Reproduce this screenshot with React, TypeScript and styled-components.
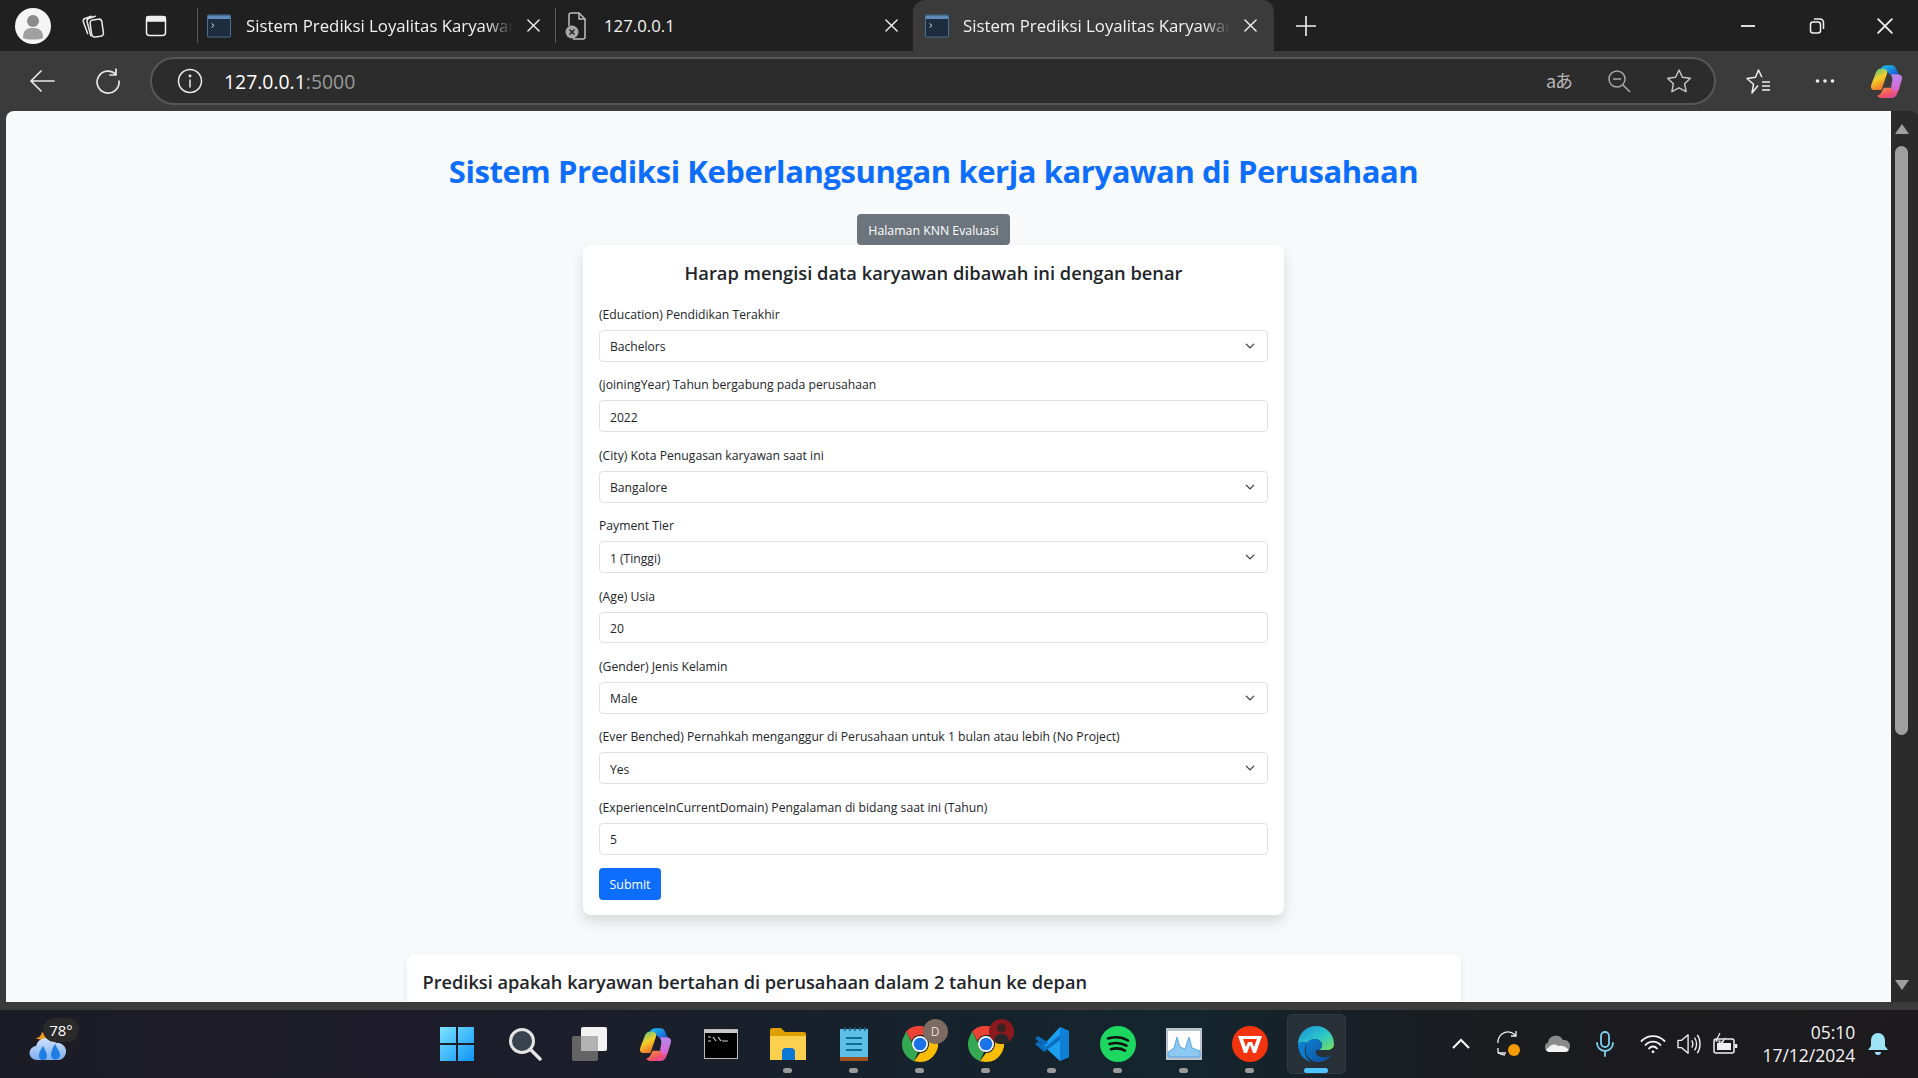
import React from "react";
import styled, { createGlobalStyle } from "styled-components";

const UI = `"Open Sans", "Noto Sans", "Liberation Sans", sans-serif`;

const Global = createGlobalStyle`
  html, body { margin: 0; padding: 0; height: 100%; overflow: hidden; background: #202020; }
  #root { height: 100%; }
  * { box-sizing: border-box; }
`;

const Frame = styled.div`
  width: 1918px; height: 1078px; display: flex; flex-direction: column;
  font-family: ${UI}; background: #3b3b3b; overflow: hidden;
`;

const TitleBar = styled.header`
  height: 51px; flex: none; display: flex; align-items: stretch; background: #202020; padding-left: 2px;
`;
const Slot = styled.div<{ $w: number }>`
  width: ${p => p.$w}px; flex: none; display: flex; align-items: center; justify-content: center;
`;
const Avatar = styled.div`
  width: 36px; height: 36px; border-radius: 50%; background: #f5f5f5; display: flex; align-items: center; justify-content: center;
`;
const Tab = styled.div<{ $active?: boolean }>`
  position: relative; flex: none; display: flex; align-items: center; color: #fff;
  width: ${p => (p.$active ? 361 : 358)}px;
  padding: ${p => (p.$active ? "0 16px 0 12px" : "0 14px 0 10px")};
  background: ${p => (p.$active ? "#3b3b3b" : "transparent")};
  border-radius: ${p => (p.$active ? "12px 12px 0 0" : "0")};
  ${p => !p.$active && `&::before { content: ""; position: absolute; left: 0; top: 8px; bottom: 8px; width: 1px; background: #5a5a5a; }`}
`;
const TabTitle = styled.span<{ $fade?: boolean; $gap?: number }>`
  flex: 1; min-width: 0; margin-left: ${p => p.$gap ?? 14}px; margin-right: 12px; margin-top: -1px; font-size: 16.8px; white-space: nowrap; overflow: hidden;
  color: #f2f2f2;
  ${p => p.$fade && `mask-image: linear-gradient(90deg, #000 90%, transparent 100%);`}
`;
const CloseGlyph = styled.span`
  width: 16px; height: 16px; flex: none; display: flex; align-items: center; justify-content: center;
`;
const WindowControls = styled.div`
  margin-left: auto; display: flex; align-items: stretch;
`;

const ToolBar = styled.div`
  height: 60px; flex: none; display: flex; align-items: center; background: #3b3b3b; padding-left: 9px;
`;
const AddressBar = styled.div`
  width: 1566px; height: 48px; margin-left: 9px; flex: none; display: flex; align-items: center;
  background: #2c2c2c; border: 2px solid #575757; border-radius: 24px; padding: 0 5px 0 25px;
`;
const Url = styled.div`
  margin-left: 21px; font-size: 19.4px; color: #fff; font-family: ${UI};
  span { color: #9a9a9a; }
`;
const AddressActions = styled.div`
  margin-left: auto; display: flex;
`;
const TranslateGlyph = styled.span`
  font-family: "Noto Sans CJK JP", "Noto Sans", sans-serif; font-size: 18px; color: #b8b8b8; letter-spacing: -1px; line-height: 1; margin-top: -2px;
`;

const ViewRow = styled.div`
  height: 891px; flex: none; display: flex; padding-left: 6px;
`;
const Page = styled.main`
  flex: 1; min-width: 0; background: #f8f9fa; border-radius: 8px 0 0 0; overflow: hidden;
  padding-right: 30px; display: flex; flex-direction: column; align-items: center; color: #212529;
`;
const Title = styled.h1`
  margin: 39px 0 22px; font-size: 31px; letter-spacing: -0.42px; line-height: 42px; font-weight: 700; color: #0d6efd; white-space: nowrap;
`;
const GreyButton = styled.button`
  width: 153px; height: 31px; flex: none; border: 0; border-radius: 4px; background: #6c757d; color: #fff;
  font-family: ${UI}; font-size: 12.3px; padding: 2px 0 0;
`;
const FormCard = styled.form`
  width: 701px; flex: none; height: 670px; background: #fff; border-radius: 8px; padding: 14px 16px 0;
  box-shadow: 0 7px 14px rgba(0,0,0,.13);
`;
const FormTitle = styled.h2`
  margin: 0 0 17px; font-size: 18.3px; line-height: 28px; font-weight: 600; text-align: center; color: #212529;
`;
const Field = styled.div`
  margin-bottom: 12.6px;
`;
const FieldLabel = styled.label`
  display: block; font-size: 12.2px; line-height: 21px; margin-bottom: 5px; color: #212529;
`;
const controlCss = `
  display: block; width: 100%; height: 31.8px; background-color: #fff; border: 1px solid #dee2e6; border-radius: 4px;
  font-size: 12.1px; color: #212529; padding: 2px 10px 0; outline: none; font-family: ${UI};
`;
const TextInput = styled.input`${controlCss}`;
const Select = styled.select`
  ${controlCss}
  appearance: none;
  background-image: url("data:image/svg+xml,%3csvg xmlns='http://www.w3.org/2000/svg' viewBox='0 0 16 16'%3e%3cpath fill='none' stroke='%23343a40' stroke-linecap='round' stroke-linejoin='round' stroke-width='2' d='m2 5 6 6 6-6'/%3e%3c/svg%3e");
  background-repeat: no-repeat; background-position: right 12px center; background-size: 10px 10px;
`;
const SubmitButton = styled.button`
  display: block; width: 62px; height: 32px; margin-top: 13.800px; border: 0; border-radius: 4px; background: #0d6efd; color: #fff;
  font-family: ${UI}; font-size: 12.4px; padding: 0;
`;
const ResultCard = styled.section`
  width: 1054px; flex: none; margin-top: 39px; min-height: 120px; background: #fff; border-radius: 8px; padding: 13px 16px;
  box-shadow: 0 2px 6px rgba(0,0,0,.07);
`;
const ResultTitle = styled.h3`
  margin: 0; font-size: 18.200px; line-height: 30px; font-weight: 600; color: #212529;
`;

const ScrollBar = styled.aside`
  width: 27px; flex: none; display: flex; flex-direction: column; align-items: center; background: #2b2b2b;
  border-radius: 0 8px 0 0; padding: 13px 6px 0 0;
`;
const Thumb = styled.div`
  width: 13px; height: 589px; margin-top: 12px; background: #9f9f9f; border-radius: 7px; flex: none;
`;
const ScrollGap = styled.div`
  flex: 1;
`;
const Arrow = styled.div<{ $down?: boolean }>`
  width: 0; height: 0; flex: none; border-left: 7px solid transparent; border-right: 7px solid transparent;
  ${p => p.$down ? "border-top: 10px solid #9f9f9f; margin-bottom: 12px;" : "border-bottom: 10px solid #9f9f9f;"}
`;

const BottomStrip = styled.div`
  height: 8px; flex: none; background: #3b3b3b;
`;
const TaskBar = styled.footer`
  height: 68px; flex: none; display: flex; align-items: center; color: #fff;
  background: linear-gradient(90deg, #1c1c26 0%, #1e1c2a 22%, #16222c 48%, #14252d 62%, #1b1c20 78%, #1c1a1d 100%);
`;
const WeatherSlot = styled.div`
  width: 424px; flex: none; padding-left: 28px; position: relative; align-self: stretch; display: flex; align-items: center;
`;
const WeatherBadge = styled.span`
  position: absolute; left: 43px; top: 8px; min-width: 36px; height: 24px; padding: 0 3px; border-radius: 12px;
  background: #2a2a2a; color: #fff; font-size: 15px; line-height: 24px; text-align: center;
`;
const AppRow = styled.div`
  display: flex; flex: none; align-self: stretch;
`;
const AppButton = styled.div<{ $active?: boolean; $running?: boolean }>`
  position: relative; width: 66.100px; flex: none; display: flex; align-items: center; justify-content: center;
  ${p => p.$active && `&::before { content: ""; position: absolute; left: 4px; right: 3px; top: 4px; bottom: 4px; border-radius: 6px; background: rgba(255,255,255,.07); border: 1px solid rgba(255,255,255,.05); }`}
  ${p => p.$running && `&::after { content: ""; position: absolute; left: 50%; bottom: 5px; width: ${p.$active ? 24 : 9}px; height: 5px; margin-left: ${p.$active ? -12 : -5}px; border-radius: 3px; background: ${p.$active ? "#4cc2ff" : "#9a9a9a"}; }`}
  svg { position: relative; }
`;
const SearchIcon = styled.svg`
  margin-left: 4px;
`;
const ProfileBadge = styled.span<{ $bg: string }>`
  position: absolute; left: 36px; top: 9px; width: 25px; height: 25px; border-radius: 50%; background: ${p => p.$bg};
  color: #e7dcd5; font-size: 12px; line-height: 25px; text-align: center; display: block; overflow: hidden;
`;
const Tray = styled.div`
  margin-left: 88px; display: flex; align-items: center; align-self: stretch; flex: none;
`;
const Clock = styled.div`
  width: 106px; flex: none; text-align: right; font-size: 17.5px; line-height: 23px; color: #f4f4f4;
`;
const BellSlot = styled.div`
  width: 40px; display: flex; justify-content: center; margin-left: 3px; flex: none;
`;

const St = { fill: "none", stroke: "#e8e8e8", strokeWidth: 1.6, strokeLinecap: "round" as const, strokeLinejoin: "round" as const };

const X = ({ s = 13, w = 1.5 }: { s?: number; w?: number }) => (
  <svg width={s} height={s} viewBox="0 0 14 14"><path d="M1 1 13 13M13 1 1 13" stroke="#f0f0f0" strokeWidth={w} strokeLinecap="round" /></svg>
);
const TermFav = () => (
  <svg width="24" height="24" viewBox="0 0 24 24">
    <rect x="0.5" y="1" width="23" height="22" rx="1" fill="#1d2c3f" stroke="#4a6f95" />
    <rect x="1" y="1.5" width="22" height="3.5" fill="#5f8bb8" />
    <path d="M4.5 9.5 7 11.5 4.5 13.5" fill="none" stroke="#c8d6e4" strokeWidth="1" />
  </svg>
);
const FileErr = () => (
  <svg width="22" height="28" viewBox="0 0 22 28">
    <path d="M6 1h8l6 6v18a2 2 0 0 1-2 2H8" fill="none" stroke="#bdbdbd" strokeWidth="1.5" />
    <path d="M14 1v6h6M6 1a2 2 0 0 0-2 2v11" fill="none" stroke="#bdbdbd" strokeWidth="1.5" />
    <circle cx="7" cy="20" r="6.5" fill="#a8a8a8" />
    <path d="M4.5 17.5l5 5M9.5 17.5l-5 5" stroke="#222" strokeWidth="1.5" />
  </svg>
);
const Copilot = ({ id, s = 30 }: { id: string; s?: number }) => (
  <svg width={s} height={s} viewBox="0 0 32 32">
    <defs>
      <linearGradient id={`${id}a`} x1="0" y1="0" x2="1" y2="1"><stop offset="0" stopColor="#19c8e8" /><stop offset="1" stopColor="#1a56d8" /></linearGradient>
      <linearGradient id={`${id}b`} x1="0" y1="0" x2="0.4" y2="1"><stop offset="0" stopColor="#35c2a0" /><stop offset=".55" stopColor="#f4d028" /><stop offset="1" stopColor="#ee7b2a" /></linearGradient>
      <linearGradient id={`${id}c`} x1="0" y1="0" x2="1" y2="1"><stop offset="0" stopColor="#f39a3c" /><stop offset=".6" stopColor="#f04d6a" /><stop offset="1" stopColor="#d24bd0" /></linearGradient>
      <linearGradient id={`${id}d`} x1="0" y1="0" x2="0" y2="1"><stop offset="0" stopColor="#b48af0" /><stop offset="1" stopColor="#e060c8" /></linearGradient>
    </defs>
    <path d="M11 6c1-3 3-4 6-4h4c2 0 3 1 4 3l2 5h-8c-2-3-6-4-8-4z" fill={`url(#${id}a)`} />
    <path d="M10 5c-2 1-3 3-4 6l-3 8c-1 3 0 5 3 5h6l5-15c.7-2-1-4-3-4z" fill={`url(#${id}b)`} />
    <path d="M21 31c2 0 4-1 5-4l2-5-14 0-2 4c-1 2-3 3-4 3 1 1 2 2 4 2z" fill={`url(#${id}c)`} />
    <path d="M20 10h6c3 0 5 2 4 5l-2.500 8c-1 2-3 3-5 3l-2-5 1-5c.5-2 0-4-1.500-6z" fill={`url(#${id}d)`} />
  </svg>
);
const Chrome = () => (
  <svg width="36" height="36" viewBox="0 0 36 36">
    <path d="M18 0a18 18 0 0 1 15.600 9H18a9 9 0 0 0-8.500 6L4 5.500A18 18 0 0 1 18 0z" fill="#ea4335" />
    <path d="M2.400 9.200 4 5.500 10 17a8.500 8.500 0 0 0 6 9l-4 9.200A18 18 0 0 1 2.400 9.200z" fill="#34a853" />
    <path d="M33.600 9A18 18 0 0 1 18 36l-6 -.8L18 27a9 9 0 0 0 7.800-13.500L24 9z" fill="#fbbc04" />
    <circle cx="18" cy="18" r="8" fill="#fff" /><circle cx="18" cy="18" r="6.300" fill="#1a73e8" />
  </svg>
);

export default function App() {
  return (
    <Frame>
      <Global />
      <TitleBar>
        <Slot $w={62}>
          <Avatar>
            <svg width="24" height="28" viewBox="0 0 24 28"><circle cx="12" cy="9" r="6" fill="#8c8c8c" /><path d="M2 26c0-8 4-10 10-10s10 2 10 10c-3 2-17 2-20 0z" fill="#a0a0a0" /></svg>
          </Avatar>
        </Slot>
        <Slot $w={58}>
          <svg width="28" height="28" viewBox="0 0 26 26" {...St} strokeWidth={1.4}>
            <rect x="11" y="7" width="11" height="16" rx="3" transform="rotate(-8 16 15)" />
            <path d="M8 20 4 9c-.4-1.500.4-2.500 1.500-3l6-2M11 22 7.500 9c-.4-1.500.3-2.500 1.500-3l6-2" />
          </svg>
        </Slot>
        <Slot $w={68}>
          <svg width="24" height="24" viewBox="0 0 24 24" fill="none" stroke="#f0f0f0" strokeWidth="1.500">
            <rect x="2.500" y="2.500" width="19" height="19" rx="3" />
            <path d="M3 3h18v4H3z" fill="#f0f0f0" />
          </svg>
        </Slot>
        <Slot $w={7} />
        <Tab>
          <TermFav />
          <TabTitle $fade $gap={15}>Sistem Prediksi Loyalitas Karyawan</TabTitle>
          <CloseGlyph><X /></CloseGlyph>
        </Tab>
        <Tab>
          <FileErr />
          <TabTitle $gap={17}>127.0.0.1</TabTitle>
          <CloseGlyph><X /></CloseGlyph>
        </Tab>
        <Tab $active>
          <TermFav />
          <TabTitle $fade>Sistem Prediksi Loyalitas Karyawan</TabTitle>
          <CloseGlyph><X /></CloseGlyph>
        </Tab>
        <Slot $w={64}>
          <svg width="22" height="22" viewBox="0 0 22 22"><path d="M11 1v20M1 11h20" stroke="#f0f0f0" strokeWidth="1.6" /></svg>
        </Slot>
        <WindowControls>
          <Slot $w={69}><svg width="16" height="16" viewBox="0 0 16 16"><path d="M1 8h14" stroke="#f0f0f0" strokeWidth="1.8" /></svg></Slot>
          <Slot $w={69}>
            <svg width="16" height="18" viewBox="0 0 16 18" fill="none" stroke="#f0f0f0" strokeWidth="1.5">
              <rect x="1.500" y="5" width="10" height="11" rx="2.500" /><path d="M5 2h6a3.500 3.500 0 0 1 3.500 3.500V12" />
            </svg>
          </Slot>
          <Slot $w={67}><X s={16} w={1.6} /></Slot>
        </WindowControls>
      </TitleBar>

      <ToolBar>
        <Slot $w={66}>
          <svg width="26" height="24" viewBox="0 0 26 24" {...St} strokeWidth={1.7}><path d="M25 12H2M12 2 2 12l10 10" /></svg>
        </Slot>
        <Slot $w={66}>
          <svg width="26" height="26" viewBox="0 0 26 26" {...St} strokeWidth={1.7}><path d="M21 6.500A11 11 0 1 0 24 13M21 1v6h-6" /></svg>
        </Slot>
        <AddressBar>
          <svg width="26" height="26" viewBox="0 0 26 26" {...St} strokeWidth={1.5}>
            <circle cx="13" cy="13" r="11.500" /><path d="M13 12v7" /><circle cx="13" cy="8" r=".7" />
          </svg>
          <Url>127.0.0.1<span>:5000</span></Url>
          <AddressActions>
            <Slot $w={60}><TranslateGlyph>aあ</TranslateGlyph></Slot>
            <Slot $w={60}>
              <svg width="24" height="24" viewBox="0 0 24 24" fill="none" stroke="#a8a8a8" strokeWidth="1.500">
                <circle cx="10" cy="10" r="8" /><path d="M6 10h8M16 16l7 7" />
              </svg>
            </Slot>
            <Slot $w={60}>
              <svg width="26" height="26" viewBox="0 0 26 26" fill="none" stroke="#c4c4c4" strokeWidth="1.500" strokeLinejoin="round">
                <path d="M13 2l3.400 7.300 8 1-5.800 5.400 1.500 7.900L13 19.800l-7.100 3.800 1.500-7.900L1.600 10.300l8-1z" />
              </svg>
            </Slot>
          </AddressActions>
        </AddressBar>
        <Slot $w={84}>
          <svg width="28" height="28" viewBox="0 0 28 28" fill="none" stroke="#f0f0f0" strokeWidth="1.500" strokeLinejoin="round">
            <path d="M14 18.500 8 26l1.500-8.700L3 11.500l8.500-1.200L14.500 3l3.400 7.300" /><path d="M18 15h8M18 19h8M18 23h8" />
          </svg>
        </Slot>
        <Slot $w={50}>
          <svg width="20" height="4" viewBox="0 0 20 4" fill="#eee"><circle cx="2.500" cy="2" r="1.800" /><circle cx="10" cy="2" r="1.800" /><circle cx="17.500" cy="2" r="1.800" /></svg>
        </Slot>
        <Slot $w={72}><Copilot id="cp1" s={36} /></Slot>
      </ToolBar>

      <ViewRow>
        <Page>
          <Title>Sistem Prediksi Keberlangsungan kerja karyawan di Perusahaan</Title>
          <GreyButton type="button">Halaman KNN Evaluasi</GreyButton>
          <FormCard>
            <FormTitle>Harap mengisi data karyawan dibawah ini dengan benar</FormTitle>
            <Field><FieldLabel>(Education) Pendidikan Terakhir</FieldLabel><Select defaultValue="Bachelors"><option>Bachelors</option></Select></Field>
            <Field><FieldLabel>(joiningYear) Tahun bergabung pada perusahaan</FieldLabel><TextInput defaultValue="2022" /></Field>
            <Field><FieldLabel>(City) Kota Penugasan karyawan saat ini</FieldLabel><Select defaultValue="Bangalore"><option>Bangalore</option></Select></Field>
            <Field><FieldLabel>Payment Tier</FieldLabel><Select defaultValue="1 (Tinggi)"><option>1 (Tinggi)</option></Select></Field>
            <Field><FieldLabel>(Age) Usia</FieldLabel><TextInput defaultValue="20" /></Field>
            <Field><FieldLabel>(Gender) Jenis Kelamin</FieldLabel><Select defaultValue="Male"><option>Male</option></Select></Field>
            <Field><FieldLabel>(Ever Benched) Pernahkah menganggur di Perusahaan untuk 1 bulan atau lebih (No Project)</FieldLabel><Select defaultValue="Yes"><option>Yes</option></Select></Field>
            <Field><FieldLabel>(ExperienceInCurrentDomain) Pengalaman di bidang saat ini (Tahun)</FieldLabel><TextInput defaultValue="5" /></Field>
            <SubmitButton type="button">Submit</SubmitButton>
          </FormCard>
          <ResultCard>
            <ResultTitle>Prediksi apakah karyawan bertahan di perusahaan dalam 2 tahun ke depan</ResultTitle>
          </ResultCard>
        </Page>
        <ScrollBar>
          <Arrow />
          <Thumb />
          <ScrollGap />
          <Arrow $down />
        </ScrollBar>
      </ViewRow>
      <BottomStrip />

      <TaskBar>
        <WeatherSlot>
          <svg width="42" height="36" viewBox="0 0 42 36">
            <defs><linearGradient id="wc" x1="0" y1="0" x2="0" y2="1"><stop offset="0" stopColor="#cfe2fb" /><stop offset="1" stopColor="#7fb0ee" /></linearGradient></defs>
            <path d="M6 12c3 1 7-1 8-6 3 2 5 5 4 9z" fill="#f59a1f" />
            <path d="M9 34a7 7 0 0 1-1-14 11 11 0 0 1 20-3 8.500 8.500 0 0 1 3 17z" fill="url(#wc)" />
            <path d="M15 20c-3 5-4 7-4 10a4 4 0 0 0 8 0c0-3-2-6-4-10zM27 18c-3 5-4 8-4 11a4.500 4.500 0 0 0 9 0c0-3-3-7-5-11z" fill="#1f7de6" />
          </svg>
          <WeatherBadge>78°</WeatherBadge>
        </WeatherSlot>
        <AppRow>
          <AppButton>
            <svg width="36" height="36" viewBox="0 0 36 36">
              <defs><linearGradient id="win" x1="0" y1="0" x2="1" y2="1"><stop offset="0" stopColor="#7be3ff" /><stop offset="1" stopColor="#0f94f7" /></linearGradient></defs>
              <path d="M1 1h16v16H1zM19 1h16v16H19zM1 19h16v16H1zM19 19h16v16H19z" fill="url(#win)" />
            </svg>
          </AppButton>
          <AppButton>
            <SearchIcon width="34" height="34" viewBox="0 0 34 34" fill="none">
              <circle cx="14" cy="14" r="11.500" stroke="#e4e4e4" strokeWidth="3" fill="#38434d" />
              <path d="M23 23l9 9" stroke="#e4e4e4" strokeWidth="3.500" strokeLinecap="round" />
            </SearchIcon>
          </AppButton>
          <AppButton>
            <svg width="36" height="36" viewBox="0 0 36 36">
              <rect x="10" y="1" width="26" height="24" rx="2" fill="#f2f2f2" />
              <rect x="1" y="10" width="26" height="25" rx="2" fill="#6a6a6a" opacity=".92" />
              <rect x="10" y="10" width="17" height="15" fill="#b2b2b2" />
            </svg>
          </AppButton>
          <AppButton><Copilot id="cp2" s={36} /></AppButton>
          <AppButton>
            <svg width="34" height="30" viewBox="0 0 34 30">
              <rect x=".5" y=".5" width="33" height="29" fill="#000" stroke="#b8b8b8" />
              <rect x="1" y="1" width="32" height="3" fill="#c8c8c8" />
              <path d="M4 8h3M4 12h3M9 8l3 4M14 8l3 4M18 12h6" stroke="#cfcfcf" strokeWidth="1.200" fill="none" />
            </svg>
          </AppButton>
          <AppButton $running>
            <svg width="38" height="34" viewBox="0 0 38 34">
              <path d="M1 3a2 2 0 0 1 2-2h9l4 4h19a2 2 0 0 1 2 2v8H1z" fill="#dca000" />
              <path d="M1 9h36v24H1z" fill="#fcd04f" />
              <path d="M13 33V25a4 4 0 0 1 4-4h5a4 4 0 0 1 4 4v8z" fill="#0a78d4" />
            </svg>
          </AppButton>
          <AppButton $running>
            <svg width="30" height="36" viewBox="0 0 30 36">
              <path d="M1 3h28v28H1z" fill="#5cc0e6" />
              <path d="M1 31h28v4H1z" fill="#a0541c" />
              <path d="M6 1v4M11 1v4M16 1v4M21 1v4M26 1v4" stroke="#1a5f80" strokeWidth="1.500" />
              <path d="M7 12h16M7 18h16M7 24h16" stroke="#0f6f96" strokeWidth="2.200" />
            </svg>
          </AppButton>
          <AppButton $running>
            <Chrome />
            <ProfileBadge $bg="#7d6a60">D</ProfileBadge>
          </AppButton>
          <AppButton $running>
            <Chrome />
            <ProfileBadge $bg="#8a1a1e">
              <svg width="25" height="25" viewBox="0 0 25 25"><circle cx="12.500" cy="9" r="4.500" fill="#3a2320" /><path d="M5 25c0-8 3-10 7.500-10s7.500 2 7.500 10z" fill="#26282c" /></svg>
            </ProfileBadge>
          </AppButton>
          <AppButton $running>
            <svg width="36" height="36" viewBox="0 0 36 36">
              <path d="M26 1 35 5v26l-9 4L9 19.500z" fill="#1e9ef0" />
              <path d="M26 1v34l9-4V5z" fill="#0f7fd6" />
              <path d="M26 9 11.500 21 4 15.500 1 18l9 8 16-12z" fill="#0a6ebf" />
              <path d="M4 10 1 12.500 10 20l4-3.500z" fill="#0a6ebf" />
            </svg>
          </AppButton>
          <AppButton $running>
            <svg width="36" height="36" viewBox="0 0 36 36">
              <circle cx="18" cy="18" r="18" fill="#1ed760" />
              <path d="M8 12.500c7-2 14-1.500 20 2M9.500 18c6-1.700 12-1.200 17 1.700M11 23.200c5-1.300 10-.9 14 1.400" fill="none" stroke="#111" strokeWidth="2.600" strokeLinecap="round" />
            </svg>
          </AppButton>
          <AppButton $running>
            <svg width="36" height="32" viewBox="0 0 36 32">
              <rect x="0" y="0" width="36" height="32" fill="#bcc4cc" />
              <rect x="2" y="3" width="32" height="26" fill="#fff" />
              <path d="M2 24 8 20 11 9 14 19 19 21 23 9 26 20 34 23V29H2z" fill="#8cc8f0" stroke="#3f9de0" strokeWidth=".8" />
            </svg>
          </AppButton>
          <AppButton $running>
            <svg width="36" height="36" viewBox="0 0 36 36">
              <circle cx="18" cy="18" r="18" fill="#f4330f" />
              <path d="M6 10h24l-6 17h-3l-3-8-3 8h-3zM11 13l3 8 2-5h4l2 5 3-8z" fill="#fff" fillRule="evenodd" />
            </svg>
          </AppButton>
          <AppButton $active $running>
            <svg width="38" height="38" viewBox="0 0 38 38">
              <defs>
                <linearGradient id="eg" x1="0" y1="0" x2="1" y2="1"><stop offset="0" stopColor="#1a8fdc" /><stop offset=".55" stopColor="#2cc8c8" /><stop offset="1" stopColor="#7ade5a" /></linearGradient>
                <linearGradient id="eb" x1="0" y1="0" x2="1" y2="1"><stop offset="0" stopColor="#0f7dd0" /><stop offset="1" stopColor="#0b4d9c" /></linearGradient>
              </defs>
              <path d="M1 19a18 18 0 0 1 36 0c0 4-3 6-7 6h-8c3-2 4-5 2-8-3-4-10-4-14 1-3-1-6-1-9 1z" fill="url(#eg)" />
              <path d="M1 19c3-2 6-2 9-1-2 3-3 7-2 11 1 3 3 6 6 8C6 35 1 28 1 19z" fill="#0f7dd0" />
              <path d="M10 18c4-5 11-5 14-1 2 3 1 6-2 8h-3c-1 3 1 6 5 7 4 .8 7 0 10-2-3 5-9 7.500-14 7-5 0-9-4-11-8-1-4 0-8 1-11z" fill="url(#eb)" />
            </svg>
          </AppButton>
        </AppRow>
        <Tray>
          <Slot $w={48}><svg width="20" height="12" viewBox="0 0 20 12"><path d="M2 10l8-8 8 8" fill="none" stroke="#fff" strokeWidth="2" /></svg></Slot>
          <Slot $w={48}>
            <svg width="26" height="28" viewBox="0 0 26 28" fill="none" stroke="#f0f0f0" strokeWidth="1.300">
              <path d="M2 13A10 10 0 0 1 20 6M20 1v5h-5M2 23h8M2 18v5" /><path d="M2 23c2 1 4 2 7 2" />
              <circle cx="18" cy="20" r="6" fill="#f59a00" stroke="none" />
            </svg>
          </Slot>
          <Slot $w={48}>
            <svg width="26" height="18" viewBox="0 0 26 18">
              <path d="M5 17a5 5 0 0 1-1-9.500A8 8 0 0 1 19 5a6 6 0 0 1 2 12z" fill="#8a8a8a" />
              <path d="M2 15c4-5 8-7 12-4 3-1 8 0 11 4-1 1-2 2-4 2H5c-1 0-2-1-3-2z" fill="#f2f2f2" />
            </svg>
          </Slot>
          <Slot $w={48}>
            <svg width="20" height="26" viewBox="0 0 20 26" fill="none" stroke="#7ed0ef" strokeWidth="1.800" strokeLinecap="round">
              <rect x="6" y="1" width="8" height="15" rx="4" /><path d="M2 12a8 8 0 0 0 16 0M10 20v5" />
            </svg>
          </Slot>
          <Slot $w={48}>
            <svg width="26" height="20" viewBox="0 0 26 20" fill="none" stroke="#f4f4f4" strokeWidth="1.800" strokeLinecap="round">
              <path d="M1.500 7a16 16 0 0 1 23 0M5.500 11a10 10 0 0 1 15 0M9 14.500a5 5 0 0 1 8 0" />
              <circle cx="13" cy="17.800" r="1.400" fill="#f4f4f4" stroke="none" />
            </svg>
          </Slot>
          <Slot $w={24}>
            <svg width="24" height="22" viewBox="0 0 26 24" fill="none" stroke="#f0f0f0" strokeWidth="1.500" strokeLinejoin="round">
              <path d="M1 8h4l7-6v20l-7-6H1zM16 8c1.500 2.500 1.500 5.500 0 8M19 5c3 4 3 10 0 14M22 2c4 5 4 15 0 20" />
            </svg>
          </Slot>
          <Slot $w={48}>
            <svg width="26" height="24" viewBox="0 0 26 24" fill="none" stroke="#f0f0f0" strokeWidth="1.500">
              <rect x="2" y="7" width="20" height="14" rx="2" /><path d="M24 12v4" strokeWidth="2.500" />
              <path d="M5 18V11h3l6-6-3 6h8v7z" fill="#f0f0f0" stroke="none" /><path d="M8 1 4 9h4l-2 6" strokeWidth="1.200" />
            </svg>
          </Slot>
          <Clock>05:10<br />17/12/2024</Clock>
          <BellSlot>
            <svg width="20" height="24" viewBox="0 0 20 24" fill="#9fe3f7">
              <path d="M10 1a7 7 0 0 0-7 7v6l-3 4h20l-3-4V8a7 7 0 0 0-7-7z" /><path d="M7 20h6a3 3 0 0 1-6 0z" />
            </svg>
          </BellSlot>
        </Tray>
      </TaskBar>
    </Frame>
  );
}
